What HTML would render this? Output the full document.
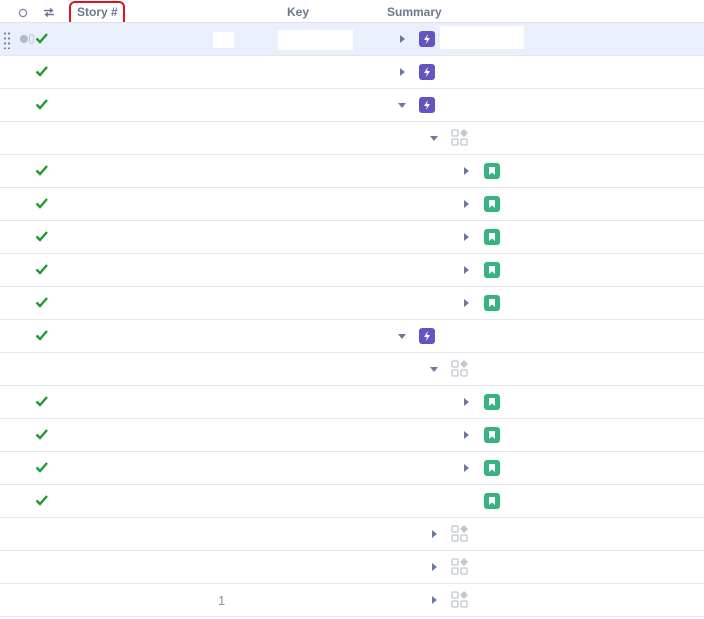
<!DOCTYPE html>
<html><head><style>
body{margin:0;width:704px;height:619px;background:#fff;font-family:"Liberation Sans",sans-serif;position:relative;overflow:hidden}
.a{position:absolute}
.hd{font-size:12px;font-weight:bold;color:#6b778c;top:5px}
.row{position:absolute;left:0;width:704px;height:32px;border-bottom:1px solid #e4e6ea}
.ck{position:absolute;left:35px;top:9px}
.ar{position:absolute;width:0;height:0}
.r{border-top:4px solid transparent;border-bottom:4px solid transparent;border-left:5px solid #6b7a99;top:12px}
.d{border-left:4px solid transparent;border-right:4px solid transparent;border-top:5px solid #6b7a99;top:14px}
.ep{position:absolute;width:16px;height:16px;border-radius:3px;background:#6554c0;top:8px}
.st{position:absolute;width:16px;height:16px;border-radius:3px;background:#36b37e;top:8px}
.gr{position:absolute;top:7px}
</style></head><body>
<svg class="a" style="left:18px;top:8px" width="10" height="10"><circle cx="5" cy="5" r="3.6" fill="none" stroke="#7a869a" stroke-width="1.2"/></svg>
<svg class="a" style="left:43px;top:7px" width="12" height="11"><path d="M1 3.5h8M7 1.5l2.5 2-2.5 2M11 7.5H3M5 5.5l-2.5 2 2.5 2" fill="none" stroke="#6b778c" stroke-width="1.4"/></svg>
<div class="a hd" style="left:77px">Story #</div>
<div class="a hd" style="left:287px">Key</div>
<div class="a hd" style="left:387px">Summary</div>
<div class="a" style="left:69px;top:1px;width:52px;height:22px;border:2px solid #e0111a;border-radius:6px"></div>
<div class="a" style="left:0;top:22px;width:704px;border-top:1px solid #dfe1e6"></div>
<div id="c"></div>
<script>
var rows=[[1,'r',1,'e'],[1,'r',1,'e'],[1,'d',1,'e'],[0,'d',2,'g'],[1,'r',3,'s'],[1,'r',3,'s'],[1,'r',3,'s'],[1,'r',3,'s'],[1,'r',3,'s'],[1,'d',1,'e'],[0,'d',2,'g'],[1,'r',3,'s'],[1,'r',3,'s'],[1,'r',3,'s'],[1,'',3,'s'],[0,'r',2,'g'],[0,'r',2,'g'],[0,'r',2,'g']];
var h='';
rows.forEach(function(r,i){
 var top=23+i*33, lx=[0,400,432,464][r[2]], ix=lx+19;
 h+='<div class="row" style="top:'+top+'px;'+(i==0?'background:#e9f0fb':'')+'">';
 if(i==0){h+='<div class="a" style="left:3px;top:8px;width:8px;height:18px;background:radial-gradient(circle,#7a869a 1px,transparent 1.3px) 0 0/4px 5px"></div>';
  h+='<div class="a" style="left:20px;top:12px;width:8px;height:8px;border-radius:50%;background:#b3b9c4"></div><div class="a" style="left:29px;top:11px;width:5px;height:10px;border:1px solid #c1c7d0;border-radius:3px;box-sizing:border-box"></div>';
  h+='<div class="a" style="left:213px;top:9px;width:21px;height:16px;background:#fff"></div><div class="a" style="left:278px;top:7px;width:75px;height:20px;background:#fff"></div><div class="a" style="left:440px;top:3px;width:84px;height:23px;background:#fff"></div>';}
 if(r[0])h+='<svg class="ck" width="14" height="12"><path d="M1.5 6.5l3.5 3.5 7-8" fill="none" stroke="#1e9a2e" stroke-width="2.4"/></svg>';
 if(r[1]=='r')h+='<div class="ar r" style="left:'+lx+'px"></div>';
 if(r[1]=='d')h+='<div class="ar d" style="left:'+(lx-2)+'px"></div>';
 if(r[3]=='e')h+='<div class="ep" style="left:'+ix+'px"><svg width="16" height="16"><path d="M9 3L5 9h3l-1 4 4-6H8z" fill="#fff"/></svg></div>';
 if(r[3]=='s')h+='<div class="st" style="left:'+(ix+1)+'px"><svg width="16" height="16"><path d="M5 4h6v8l-3-2.5L5 12z" fill="#fff"/></svg></div>';
 if(r[3]=='g')h+='<svg class="gr" style="left:'+ix+'px" width="18" height="18"><g fill="none" stroke="#c1c7d0" stroke-width="1.3"><rect x="1" y="1" width="6" height="6" rx="1"/><rect x="1" y="10" width="6" height="6" rx="1"/><rect x="10" y="10" width="6" height="6" rx="1"/></g><path d="M13 0l4 4-4 4-4-4z" fill="#c1c7d0"/></svg>';
 if(i==17)h+='<div class="a" style="left:218px;top:9px;font-size:13px;color:#8993a4">1</div>';
 h+='</div>';
});
document.getElementById('c').innerHTML=h;
</script>
</body></html>
